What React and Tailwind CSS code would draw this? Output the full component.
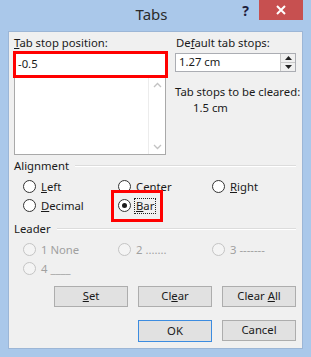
const font = { fontFamily: '"Segoe UI", "Noto Sans", Arial, sans-serif' };

function Radio({ checked, disabled }) {
  return (
    <span
      className={`flex items-center justify-center w-[13px] h-[13px] rounded-full border shrink-0 ${
        disabled ? "border-[#c4c4c4] bg-[#f4f4f4]" : "border-[#333333] bg-white"
      }`}
    >
      {checked && <span className="w-[5px] h-[5px] rounded-full bg-[#1a1a1a]" />}
    </span>
  );
}

function Option({ children, checked, disabled, focus }) {
  return (
    <div className="flex items-center gap-[4px] h-[19px] whitespace-nowrap">
      <Radio checked={checked} disabled={disabled} />
      <span
        className={`leading-[14px] px-[1px] ${disabled ? "text-[#a0a0a0]" : "text-[#1a1a1a]"} ${
          focus ? "outline outline-1 outline-dotted outline-[#222]" : ""
        }`}
      >
        {children}
      </span>
    </div>
  );
}

function GroupHeader({ label }) {
  return (
    <div className="flex items-center h-[16px] gap-[6px] pl-[1px] pr-[6px]">
      <span className="leading-[16px] text-[#1a1a1a]">{label}</span>
      <div className="flex-1 border-t border-[#dcdcdc] border-b border-b-white" />
    </div>
  );
}

function Button({ children, primary }) {
  return (
    <div
      className={`w-[74px] flex items-center justify-center bg-[#e1e1e1] border text-[#1a1a1a] whitespace-pre ${
        primary ? "h-[22px] border-[#3c8ce0]" : "h-[21px] border-[#adadad]"
      }`}
    >
      <span>{children}</span>
    </div>
  );
}

export default function App() {
  return (
    <div className="w-[311px] h-[357px] bg-[#aac8ea] flex flex-col text-[11.3px]" style={font}>
      <div className="h-[31px] flex">
        <div className="flex-1" />
        <div className="pt-[4px] text-[15px] leading-[20px] text-[#2b2b2b]">Tabs</div>
        <div className="flex-1 flex justify-end items-start pr-[8px]">
          <span className="mt-[4px] mr-[10px] text-[14px] leading-[14px] font-bold text-[#1e1e3c]">?</span>
          <div className="w-[44px] h-[20px] bg-[#c75050] flex items-center justify-center">
            <svg width="10" height="10" viewBox="0 0 10 10">
              <path d="M1 1 L9 9 M9 1 L1 9" stroke="white" strokeWidth="2" />
            </svg>
          </div>
        </div>
      </div>

      <div className="mx-[8px] h-[318px] bg-[#f0f0f0] border border-[#9cb6d6] flex flex-col pl-[4px] pt-[3px]">
        <div className="flex gap-[7px]">
          <div className="w-[155px] flex flex-col">
            <div className="h-[16px] leading-[16px] pl-[1px] text-[#1a1a1a]">
              <span className="underline">T</span>ab stop position:
            </div>
            <div className="h-[27px] border-[3px] border-[#ff0000] bg-white flex items-center pl-[2px] text-[#1a1a1a]">
              -0.5
            </div>
            <div className="ml-[1px] w-[152px] h-[77px] border border-[#a9a9a9] border-t-0 bg-white flex justify-end">
              <div className="w-[17px] border-l border-[#ececec] flex flex-col justify-between items-center py-[4px]">
                <svg width="9" height="6" viewBox="0 0 9 6">
                  <path d="M1 5 L4.5 1.5 L8 5" stroke="#c2c2c2" strokeWidth="1.3" fill="none" />
                </svg>
                <svg width="9" height="6" viewBox="0 0 9 6">
                  <path d="M1 1 L4.5 4.5 L8 1" stroke="#c2c2c2" strokeWidth="1.3" fill="none" />
                </svg>
              </div>
            </div>
          </div>
          <div className="w-[121px] flex flex-col text-[#1a1a1a] whitespace-nowrap">
            <div className="h-[16px] leading-[16px] pl-[1px]">
              De<span className="underline">f</span>ault tab stops:
            </div>
            <div className="mt-[2px] h-[19px] border border-[#abadb3] bg-white flex items-center">
              <span className="flex-1 pl-[3px]">1.27 cm</span>
              <div className="w-[15px] h-[17px] border-l border-[#c8c8c8] flex flex-col">
                <div className="flex-1 bg-[#f0f0f0] border-b border-[#c8c8c8] flex items-center justify-center">
                  <svg width="7" height="4" viewBox="0 0 7 4"><path d="M0 4 L3.5 0 L7 4 Z" fill="#222" /></svg>
                </div>
                <div className="flex-1 bg-[#f0f0f0] flex items-center justify-center">
                  <svg width="7" height="4" viewBox="0 0 7 4"><path d="M0 0 L3.5 4 L7 0 Z" fill="#222" /></svg>
                </div>
              </div>
            </div>
            <div className="mt-[12px] h-[16px] leading-[16px]">Tab stops to be cleared:</div>
            <div className="h-[16px] leading-[16px] pl-[18px]">1.5 cm</div>
          </div>
        </div>

        <div className="mt-[3px]">
          <GroupHeader label="Alignment" />
        </div>
        <div className="mt-[3px] grid grid-cols-[95px_94px_1fr] pl-[10px]">
          <Option><span className="underline">L</span>eft</Option>
          <Option><span className="underline">C</span>enter</Option>
          <Option><span className="underline">R</span>ight</Option>
          <Option><span className="underline">D</span>ecimal</Option>
          <div className="relative">
            <Option checked focus><span className="underline">B</span>ar</Option>
            <span className="absolute -left-[7px] -top-[6px] w-[52px] h-[32px] border-[3px] border-[#ff0000]" />
          </div>
        </div>

        <div className="mt-[6px]">
          <GroupHeader label="Leader" />
        </div>
        <div className="mt-[3px] grid grid-cols-[95px_94px_1fr] pl-[10px]">
          <Option disabled>1 None</Option>
          <Option disabled>2 .......</Option>
          <Option disabled>3 -------</Option>
          <Option disabled>4 ____</Option>
        </div>

        <div className="mt-[8px] flex justify-end gap-[10px] pr-[6px]">
          <Button><span className="underline">S</span>et</Button>
          <Button>Cl<span className="underline">e</span>ar</Button>
          <Button>Clear <span className="underline">A</span>ll</Button>
        </div>
        <div className="mt-[13px] flex justify-end gap-[10px] pr-[6px]">
          <Button primary>OK</Button>
          <Button>Cancel</Button>
        </div>
      </div>
    </div>
  );
}
